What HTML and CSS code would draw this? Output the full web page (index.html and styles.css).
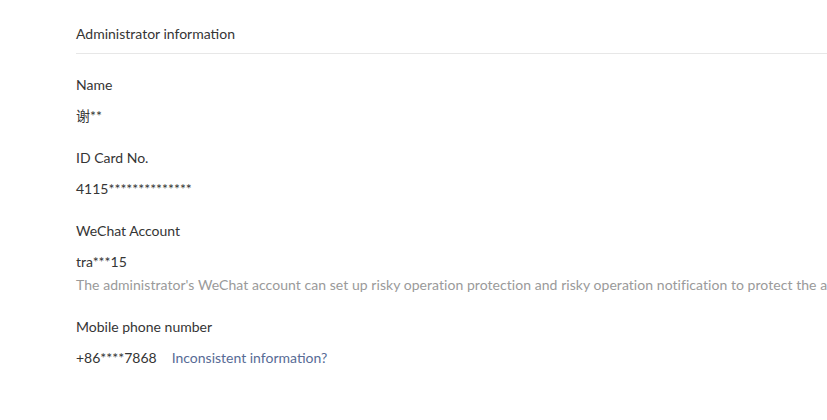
FILE: index.html
```html
<!DOCTYPE html>
<html>
<head>
<meta charset="utf-8">
<link rel="stylesheet" href="styles.css">
</head>
<body>
<div class="panel">
  <div class="header">Administrator information</div>
  <div class="field">
    <div class="label">Name</div>
    <div class="value">谢**</div>
  </div>
  <div class="field">
    <div class="label">ID Card No.</div>
    <div class="value">4115**************</div>
  </div>
  <div class="field">
    <div class="label">WeChat Account</div>
    <div class="value">tra***15</div>
    <div class="hint">The administrator's WeChat account can set up risky operation protection and risky operation notification to protect the account security</div>
  </div>
  <div class="field">
    <div class="label">Mobile phone number</div>
    <div class="value row"><span>+86****7868</span><a class="link" href="#">Inconsistent information?</a></div>
  </div>
</div>
</body>
</html>
```
FILE: styles.css
```css
html, body {
  margin: 0;
  padding: 0;
  background: #ffffff;
  overflow: hidden;
}
body {
  font-family: "Lato", "Noto Sans CJK SC", sans-serif;
  font-size: 14px;
  line-height: 22px;
  color: #353535;
}
.panel {
  padding-left: 76px;
}
.header {
  padding-top: 23px;
  padding-bottom: 8px;
  border-bottom: 1px solid #e7e7e7;
  white-space: nowrap;
}
.field {
  margin-top: 20px;
}
.label {
  color: #353535;
}
.value {
  margin-top: 9px;
  color: #353535;
}
.hint {
  margin-top: 1px;
  color: #9a9a9a;
  letter-spacing: 0.05px;
  white-space: nowrap;
}
.row {
  display: flex;
  gap: 15px;
}
.link {
  color: #576b95;
  text-decoration: none;
}
```
